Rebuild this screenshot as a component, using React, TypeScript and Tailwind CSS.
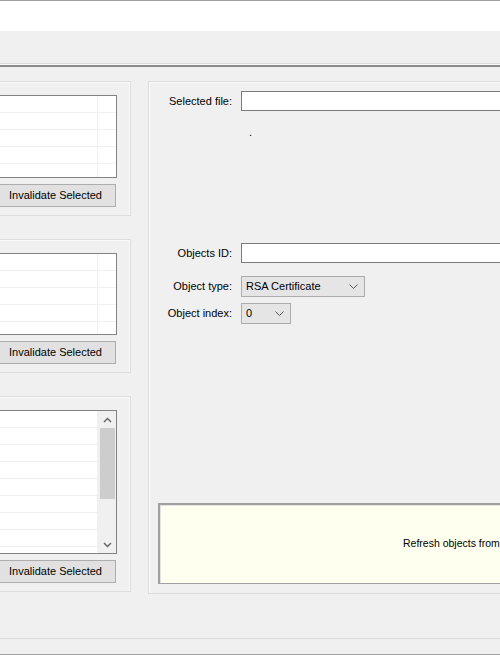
import React from "react"

const font = { fontFamily: '"Liberation Sans", Arial, sans-serif' }

function ListView({ height, rows, scroll }: { height: number; rows: number; scroll?: boolean }) {
  return (
    <div
      className="relative bg-white border border-l-0 border-[#828282] overflow-hidden"
      style={{ height }}
    >
      {/* column separator */}
      <div className="absolute left-[97px] top-0 bottom-0 w-px bg-[#f0f0f0]" />
      <div className="flex flex-col pt-[16px]">
        {Array.from({ length: rows }).map((_, i) => (
          <div key={i} className="h-[17px] border-t border-[#f0f0f0]" />
        ))}
      </div>
      {scroll && (
        <div className="absolute right-0 top-0 bottom-0 w-[18px] bg-[#f0f0f0] flex flex-col items-center">
          <div className="h-[17px] w-full flex items-center justify-center">
            <svg width="9" height="6" viewBox="0 0 9 6">
              <path d="M1 5 L4.5 1.5 L8 5" fill="none" stroke="#606060" strokeWidth="1.4" />
            </svg>
          </div>
          <div className="w-[15px] h-[71px] bg-[#cdcdcd]" />
          <div className="flex-1" />
          <div className="h-[17px] w-full flex items-center justify-center">
            <svg width="9" height="6" viewBox="0 0 9 6">
              <path d="M1 1 L4.5 4.5 L8 1" fill="none" stroke="#606060" strokeWidth="1.4" />
            </svg>
          </div>
        </div>
      )}
    </div>
  )
}

function InvalidateButton() {
  return (
    <div className="h-[23px] w-[116px] bg-[#e1e1e1] border border-l-0 border-[#adadad] flex items-center pl-[9px] text-[11px] text-black">
      Invalidate Selected
    </div>
  )
}

function LeftGroup({ listHeight, rows, scroll }: { listHeight: number; rows: number; scroll?: boolean }) {
  return (
    <div className="w-[131px] border border-l-0 border-[#dcdcdc] shadow-[inset_-1px_1px_0_#fafafa] pt-[13px] pb-[8px] pr-[13px]">
      <ListView height={listHeight} rows={rows} scroll={scroll} />
      <div className="mt-[6px]">
        <InvalidateButton />
      </div>
    </div>
  )
}

function Chevron() {
  return (
    <svg width="9" height="5" viewBox="0 0 9 5">
      <path d="M0.5 0.5 L4.5 4.5 L8.5 0.5" fill="none" stroke="#555" strokeWidth="1" />
    </svg>
  )
}

function FieldLabel({ children }: { children: React.ReactNode }) {
  return <div className="w-[83px] text-right text-[11px] text-black">{children}</div>
}

export default function App() {
  return (
    <div className="w-[500px] h-[655px] overflow-hidden bg-[#f0f0f0] flex flex-col select-none" style={font}>
      {/* title strip */}
      <div className="h-[31px] bg-white border-t border-[#a0a0a0]" />
      {/* toolbar strip */}
      <div className="h-[32px] bg-[#f0f0f0]" />
      <div className="h-px bg-[#dadada]" />
      <div className="h-px bg-[#fafafa]" />
      <div className="h-[2px] bg-[#8c8c8c]" />

      {/* main area */}
      <div className="flex-1 flex pt-[14px] min-h-0">
        {/* left column of groups */}
        <div className="flex flex-col gap-[23px] w-[131px] shrink-0">
          <LeftGroup listHeight={83} rows={4} />
          <LeftGroup listHeight={82} rows={4} />
          <LeftGroup listHeight={144} rows={8} scroll />
        </div>

        {/* right group */}
        <div className="ml-[17px] w-[420px] shrink-0 h-[513px] border border-r-0 border-[#dcdcdc] shadow-[inset_1px_1px_0_#fafafa] flex flex-col pt-[9px]">
          <div className="flex items-center h-[20px]">
            <FieldLabel>Selected file:</FieldLabel>
            <div className="ml-[9px] flex-1 h-[20px] bg-white border border-r-0 border-[#7a7a7a]" />
          </div>
          <div className="h-[27px] flex items-end pl-[100px] text-[11px] leading-none">.</div>

          <div className="flex items-center h-[20px] mt-[105px]">
            <FieldLabel>Objects ID:</FieldLabel>
            <div className="ml-[9px] flex-1 h-[20px] bg-white border border-r-0 border-[#7a7a7a]" />
          </div>

          <div className="flex items-center h-[21px] mt-[13px]">
            <FieldLabel>Object type:</FieldLabel>
            <div className="ml-[9px] w-[124px] h-[21px] bg-[#e5e5e5] border border-[#acacac] flex items-center justify-between pl-[4px] pr-[6px] text-[11px]">
              <span>RSA Certificate</span>
              <Chevron />
            </div>
          </div>

          <div className="flex items-center h-[21px] mt-[6px]">
            <FieldLabel>Object index:</FieldLabel>
            <div className="ml-[9px] w-[50px] h-[21px] bg-[#e5e5e5] border border-[#acacac] flex items-center justify-between pl-[4px] pr-[6px] text-[11px]">
              <span>0</span>
              <Chevron />
            </div>
          </div>

          <div className="flex-1" />

          {/* info panel */}
          <div className="ml-[9px] mb-[9px] h-[81px] bg-[#fffff0] border-t-2 border-l-2 border-b border-[#a0a0a0] shadow-[inset_1px_1px_0_#e3e3e3] flex items-center pl-[243px] text-[10.5px] text-black whitespace-nowrap">
            Refresh objects from
          </div>
        </div>
      </div>

      {/* status bar */}
      <div className="h-px bg-[#dcdcdc]" />
      <div className="h-[15px] bg-[#f0f0f0]" />
      <div className="h-px bg-[#a0a0a0]" />
    </div>
  )
}
